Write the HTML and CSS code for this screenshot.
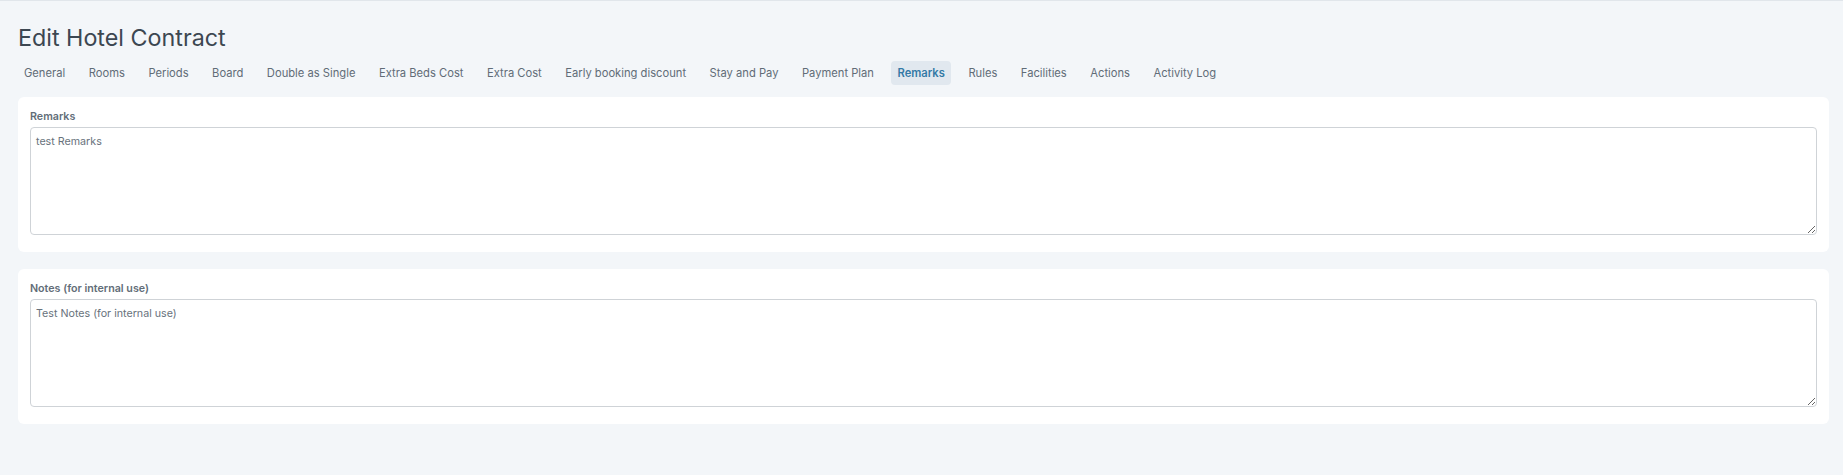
FILE: index.html
```html
<!DOCTYPE html>
<html lang="en">
<head>
<meta charset="utf-8">
<title>Edit Hotel Contract</title>
<link rel="stylesheet" href="styles.css">
</head>
<body>
<div class="page">
  <h1 class="title">Edit Hotel Contract</h1>
  <nav class="tabs">
    <a class="tab">General</a>
    <a class="tab">Rooms</a>
    <a class="tab">Periods</a>
    <a class="tab">Board</a>
    <a class="tab">Double as Single</a>
    <a class="tab">Extra Beds Cost</a>
    <a class="tab">Extra Cost</a>
    <a class="tab">Early booking discount</a>
    <a class="tab">Stay and Pay</a>
    <a class="tab">Payment Plan</a>
    <a class="tab tab-active">Remarks</a>
    <a class="tab">Rules</a>
    <a class="tab">Facilities</a>
    <a class="tab">Actions</a>
    <a class="tab">Activity Log</a>
  </nav>
  <section class="card">
    <label class="field-label" for="remarks">Remarks</label>
    <textarea class="field" id="remarks">test Remarks</textarea>
  </section>
  <section class="card">
    <label class="field-label" for="notes">Notes (for internal use)</label>
    <textarea class="field" id="notes">Test Notes (for internal use)</textarea>
  </section>
</div>
</body>
</html>
```
FILE: styles.css
```css
html, body {
  margin: 0;
  padding: 0;
  background: #f3f6f9;
}
body {
  border-top: 1px solid #e1e6eb;
  font-family: Inter, "Noto Sans", sans-serif;
  min-height: 474px;
  box-sizing: border-box;
}
.page {
  padding: 22px 14px 0 18px;
}
.title {
  margin: 0;
  font-size: 23.3px;
  line-height: 30px;
  font-weight: 400;
  color: #3c4751;
}
.tabs {
  display: flex;
  gap: 11.5px;
  margin: 8px 0 12px;
}
.tab {
  padding: 5px 6px;
  font-size: 11.2px;
  line-height: 14px;
  color: #616c77;
  border-radius: 4px;
  cursor: pointer;
  white-space: nowrap;
}
.tab-active {
  background: #e1e8ef;
  color: #347aa6;
  font-weight: 600;
}
.card {
  background: #ffffff;
  border-radius: 6px;
  padding: 12px 12px 17px;
  margin-bottom: 17px;
}
.field-label {
  display: block;
  font-size: 10.7px;
  line-height: 15px;
  font-weight: 600;
  color: #626d78;
  margin-bottom: 3px;
}
.field {
  display: block;
  box-sizing: border-box;
  width: 100%;
  height: 108px;
  margin: 0;
  padding: 6px 5px 5px;
  border: 1px solid #cfd3d7;
  border-radius: 4px;
  font-family: Inter, "Noto Sans", sans-serif;
  font-size: 10.7px;
  line-height: 16px;
  color: #68727c;
  background: #ffffff;
  resize: vertical;
}
```
